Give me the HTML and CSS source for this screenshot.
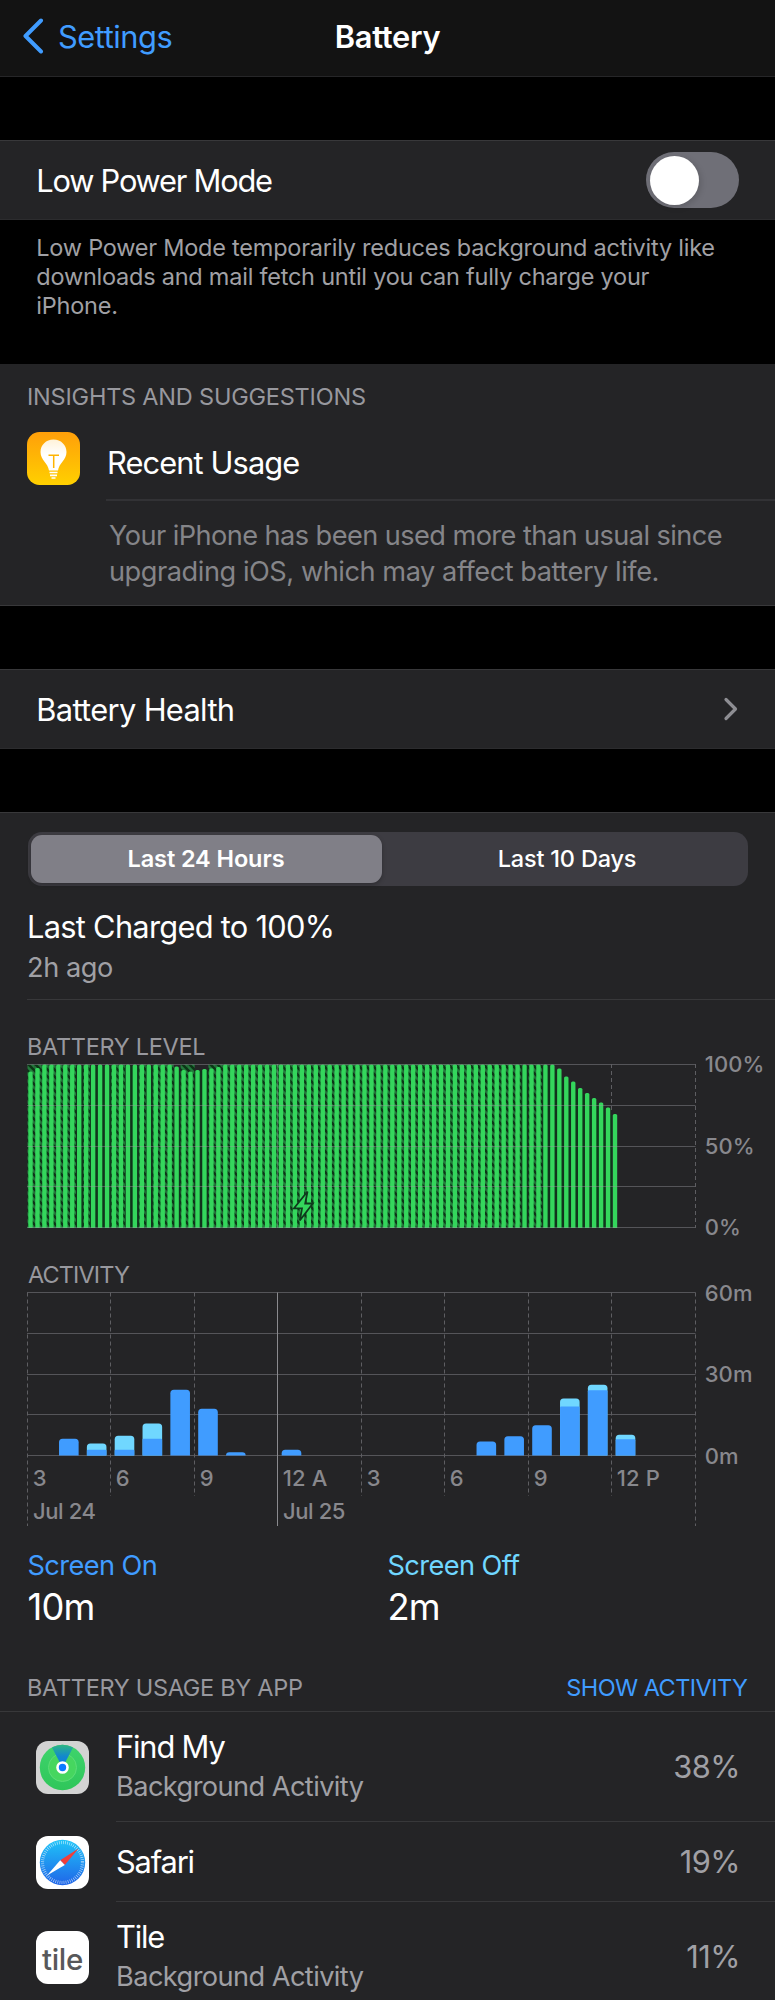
FILE: index.html
```
<!DOCTYPE html>
<html lang="en">
<head>
  <meta charset="UTF-8" />
  <meta name="viewport" content="width=device-width, initial-scale=1.0"/>
  <title>Battery</title>
  <link rel="stylesheet" href="styles.css">
</head>
<body>

  <header class="navbar">
    <a class="back" href="#">
      <svg width="22" height="36" viewBox="0 0 22 36"><path d="M19 2.5 L3.5 18 L19 33.5" fill="none" stroke="#409cff" stroke-width="4" stroke-linecap="round" stroke-linejoin="round"/></svg>
      <span>Settings</span>
    </a>
    <h1>Battery</h1>
  </header>

  <section class="group row-group">
    <span class="row-title low-power">Low Power Mode</span>
    <div class="toggle"><div class="knob"></div></div>
  </section>
  <p class="footnote">Low Power Mode temporarily reduces background activity like<br>downloads and mail fetch until you can fully charge your<br>iPhone.</p>

  <section class="group insights">
    <h2 class="label">INSIGHTS AND SUGGESTIONS</h2>
    <div class="insight-row">
      <svg class="insight-icon" width="53" height="53" viewBox="0 0 53 53">
        <defs>
          <linearGradient id="amber" x1="0" y1="0" x2="0" y2="1"><stop offset="0" stop-color="#ff9f0a"/><stop offset="1" stop-color="#ffd000"/></linearGradient>
          <linearGradient id="bulb" x1="0" y1="0" x2="0" y2="1"><stop offset="0" stop-color="#fff2d8"/><stop offset=".5" stop-color="#fff"/></linearGradient>
        </defs>
        <rect width="53" height="53" rx="12.5" fill="url(#amber)"/>
        <path d="M26.5 7.5 C19 7.5 13.5 13 13.5 20 C13.5 28 21 31 22 38.5 H31 C32 31 39.5 28 39.5 20 C39.5 13 34 7.5 26.5 7.5 Z" fill="url(#bulb)"/>
        <path d="M21.5 23.3 H32 M26.7 23.3 V36" stroke="#ffb400" stroke-width="1.5" fill="none"/>
        <path d="M22.5 40.5 H30.5 M23 43.3 H30 M24.5 46 H28.5" stroke="#fff" stroke-width="1.7" fill="none"/>
      </svg>
      <span class="row-title">Recent Usage</span>
    </div>
    <p class="insight-text">Your iPhone has been used more than usual since<br><span>upgrading iOS, which may affect battery life.</span></p>
  </section>

  <section class="group row-group health">
    <span class="row-title">Battery Health</span>
    <svg width="16" height="24" viewBox="0 0 16 24"><path d="M3 2.5 L12.5 12 L3 21.5" fill="none" stroke="#8e8e93" stroke-width="3.2" stroke-linecap="round" stroke-linejoin="round"/></svg>
  </section>

  <section class="group usage">
    <div class="segmented">
      <button class="active">Last 24 Hours</button>
      <button>Last 10 Days</button>
    </div>

    <div class="charged">
      <div class="row-title">Last Charged to 100%</div>
      <div class="sub">2h ago</div>
    </div>

    <h2 class="label level-label">BATTERY LEVEL</h2>
    <svg class="chart" id="levelChart" width="775" height="190" viewBox="0 0 775 190">
      <defs>
        <pattern id="stripes" width="7" height="7" patternUnits="userSpaceOnUse">
          <rect width="7" height="7" fill="#247a3c"/>
          <path d="M-1.5 -1.5 L8.5 8.5 M-1.5 5.5 L1.5 8.5 M5.5 -1.5 L8.5 1.5" stroke="#0b3616" stroke-width="2.6"/>
        </pattern>
      </defs>
    </svg>

    <h2 class="label activity-label">ACTIVITY</h2>
    <svg class="chart" id="activityChart" width="775" height="250" viewBox="0 0 775 250"></svg>

    <div class="screen-time">
      <div>
        <div class="screen-name on">Screen On</div>
        <div class="screen-value">10m</div>
      </div>
      <div>
        <div class="screen-name off">Screen Off</div>
        <div class="screen-value">2m</div>
      </div>
    </div>

    <div class="apps-head">
      <h2 class="label">BATTERY USAGE BY APP</h2>
      <a class="label show" href="#">SHOW ACTIVITY</a>
    </div>

    <div class="app">
      <svg class="app-icon" width="53" height="53" viewBox="0 0 53 53">
        <defs>
          <linearGradient id="findGreen" x1="0" y1="0" x2="0" y2="1"><stop offset="0" stop-color="#3fd46c"/><stop offset="1" stop-color="#2fc65a"/></linearGradient>
          <linearGradient id="beam" x1="0" y1="0" x2="0" y2="1"><stop offset="0" stop-color="#2db684"/><stop offset=".5" stop-color="#1389cc"/><stop offset="1" stop-color="#0a78e8"/></linearGradient>
        </defs>
        <rect width="53" height="53" rx="12" fill="#d3d3d3"/>
        <circle cx="26.5" cy="26.5" r="22.7" fill="url(#findGreen)"/>
        <circle cx="26.5" cy="26.5" r="14" fill="#46d65f" stroke="#5bdd78" stroke-width="1"/>
        <path d="M26.5 26.5 L16 6.4 A22.7 22.7 0 0 1 37 6.4 Z" fill="url(#beam)"/>
        <circle cx="26.5" cy="26.5" r="5" fill="#0a7aff" stroke="#fff" stroke-width="2.6"/>
      </svg>
      <div class="app-body two-line">
        <div>
          <div class="row-title">Find My</div>
          <div class="sub">Background Activity</div>
        </div>
        <span class="percent">38%</span>
      </div>
    </div>

    <div class="app">
      <svg class="app-icon" width="53" height="53" viewBox="0 0 53 53">
        <defs>
          <linearGradient id="safariBlue" x1="0" y1="0" x2="0" y2="1"><stop offset="0" stop-color="#1fc4f8"/><stop offset="1" stop-color="#2065e8"/></linearGradient>
        </defs>
        <rect width="53" height="53" rx="12" fill="#fff"/>
        <circle cx="26.5" cy="26.5" r="22.7" fill="url(#safariBlue)"/>
        <circle cx="26.5" cy="26.5" r="20" fill="none" stroke="#fff" stroke-opacity=".65" stroke-width="3.2" stroke-dasharray=".7 1.394"/>
        <path d="M42.5 12.5 L28.8 29 L24.2 24.2 Z" fill="#f03e3a"/>
        <path d="M11 39.5 L24.2 24.2 L28.8 29 Z" fill="#fff"/>
      </svg>
      <div class="app-body one-line">
        <div class="row-title">Safari</div>
        <span class="percent">19%</span>
      </div>
    </div>

    <div class="app">
      <div class="app-icon tile-icon">tile</div>
      <div class="app-body two-line">
        <div>
          <div class="row-title">Tile</div>
          <div class="sub">Background Activity</div>
        </div>
        <span class="percent">11%</span>
      </div>
    </div>
  </section>

  <script src="charts.js"></script>
</body>
</html>
```
FILE: charts.js
```
const NS = 'http://www.w3.org/2000/svg';
const LEFT = 27.5;
const RIGHT = 695.5;
const HOUR = (RIGHT - LEFT) / 24;

function add(parent, tag, attrs, text) {
  const el = document.createElementNS(NS, tag);
  for (const key in attrs) el.setAttribute(key, attrs[key]);
  if (text) el.textContent = text;
  parent.appendChild(el);
}

function hLines(svg, top, bottom) {
  for (let i = 0; i <= 4; i++) {
    const y = Math.round(top + (bottom - top) * i / 4) + 0.5;
    add(svg, 'line', { x1: 27, x2: RIGHT, y1: y, y2: y, class: 'grid' });
  }
}

function axisLabels(svg, labels, top, bottom) {
  labels.forEach((label, i) => {
    add(svg, 'text', { x: 704.7, y: top + (bottom - top) * i / 2 + 8, class: 'axis' }, label);
  });
}

// rounded top, square bottom
function barPath(x, y, w, bottom, r) {
  r = Math.min(r, bottom - y);
  return `M${x} ${bottom}V${y + r}q0 ${-r} ${r} ${-r}h${w - 2 * r}q${r} 0 ${r} ${r}V${bottom}Z`;
}

// battery level, one bar for every 15 minutes
function drawLevel() {
  const svg = document.getElementById('levelChart');
  const top = 14.5, bottom = 178, step = HOUR / 4;
  const drop = { 0: 7, 1: 3.5, 21: 2, 22: 5.5, 23: 7, 24: 5.5, 25: 4.5, 26: 4, 27: 2.5,
    76: 4, 77: 12, 78: 17, 79: 23.5, 80: 28.5, 81: 33.5, 82: 38, 83: 43, 84: 49.5 };
  const idle = [7, 9, 10, 11, 14, 15, 17, 21, 24, 25, 71];

  for (let i = 0; i < 84; i++) {
    const x = LEFT + i * step;
    const y = top + (drop[i] || 0);
    const plain = idle.includes(i) || i > 73;
    const gapTop = plain ? Math.max(y, top + (drop[i + 1] || 0)) + 1 : top;
    add(svg, 'rect', { x: x, y: gapTop, width: step + 0.1, height: bottom - gapTop, fill: plain ? '#10351c' : 'url(#stripes)' });
  }
  for (let i = 0; i < 85; i++) {
    const y = top + (drop[i] || 0);
    add(svg, 'path', { d: barPath(LEFT + i * step + 0.8, y, 4.4, bottom, 1.5), fill: '#34d65c' });
  }
  hLines(svg, 14, 177);
  add(svg, 'line', { x1: 277.5, x2: 277.5, y1: 14, y2: 178, class: 'grid' });
  add(svg, 'line', { x1: 611.5, x2: 611.5, y1: 14, y2: 62, class: 'dashed' });
  add(svg, 'line', { x1: RIGHT, x2: RIGHT, y1: 14, y2: 178, class: 'dashed' });
  add(svg, 'path', { d: 'M307.5 141.5L294 158.3H302L299.8 170.5L312.8 153.5H305.2Z', fill: '#34d65c', stroke: '#0f3a1c', 'stroke-width': 1.8 });
  axisLabels(svg, ['100%', '50%', '0%'], 14, 177);
}

// screen time per hour: [hour, total height, screen on height]
function drawActivity() {
  const svg = document.getElementById('activityChart');
  const top = 12.5, bottom = 175.5;
  const data = [
    [1, 16.7, 16.7], [2, 12, 5.7], [3, 19.7, 5.7], [4, 32, 16.7], [5, 65.7, 65.7],
    [6, 46.7, 46.7], [7, 3.3, 3.3], [9, 5.7, 5.7], [16, 14, 14], [17, 19.3, 19.3],
    [18, 30.3, 30.3], [19, 57, 49], [20, 70.7, 65.3], [21, 20.7, 16.3]
  ];
  hLines(svg, 12, 175);
  const hours = ['3', '6', '9', '12 A', '3', '6', '9', '12 P'];
  for (let i = 0; i <= 8; i++) {
    const x = Math.floor(LEFT + i * HOUR * 3 - 0.5) + 0.5;
    const midnight = i === 3;
    const y2 = i % 8 === 0 || midnight ? 246 : 216;
    add(svg, 'line', { x1: x, x2: x, y1: top, y2: y2, class: midnight ? 'solid' : 'dashed' });
    if (hours[i]) add(svg, 'text', { x: x + 5.3, y: 205.5, class: 'axis' }, hours[i]);
  }
  add(svg, 'text', { x: 33, y: 238.5, class: 'axis day' }, 'Jul 24');
  add(svg, 'text', { x: 283, y: 238.5, class: 'axis day' }, 'Jul 25');
  for (const [hour, total, on] of data) {
    const x = LEFT + hour * HOUR + 3.7;
    if (total > on) {
      add(svg, 'path', { d: barPath(x, bottom - total, 19.6, bottom, 3.5), fill: '#70d7ff' });
    }
    add(svg, 'path', { d: barPath(x, bottom - on, 19.6, bottom, total > on ? 1 : 3.5), fill: '#409cff' });
  }
  axisLabels(svg, ['60m', '30m', '0m'], top, bottom);
}

drawLevel();
drawActivity();
```
FILE: styles.css
```
* {
  box-sizing: border-box;
}
body {
  margin: 0;
  background: #000;
  color: #fff;
  font-family: Inter, "Liberation Sans", sans-serif;
  font-size: 30.8px;
  height: 2000px;
  overflow: hidden;
}
h1, h2, p {
  margin: 0;
  font-weight: 400;
}
a {
  text-decoration: none;
}
.navbar {
  display: grid;
  grid-template-columns: 1fr auto 1fr;
  align-items: center;
  height: 77px;
  padding: 0 22px 4px;
  background: #131313;
  border-bottom: 1px solid #262628;
}
.back {
  display: flex;
  align-items: center;
  gap: 14px;
  color: #409cff;
  letter-spacing: -0.45px;
}
.navbar h1 {
  font-size: 30.8px;
  font-weight: 600;
  letter-spacing: -0.3px;
}
.group {
  background: #242426;
}
.row-title {
  line-height: 38px;
  letter-spacing: -0.9px;
}
.row-group {
  display: flex;
  align-items: center;
  justify-content: space-between;
  height: 80px;
  margin-top: 63px;
  padding: 0 36px 0 36.3px;
  border-top: 1px solid #38383a;
  border-bottom: 1px solid #2c2c2e;
}
.row-group .row-title {
  padding-top: 1px;
}
.low-power {
  letter-spacing: -1.22px;
}
.toggle {
  width: 93px;
  height: 56px;
  padding: 3.5px;
  border-radius: 28px;
  background: #6f6f77;
}
.knob {
  width: 49px;
  height: 49px;
  border-radius: 50%;
  background: #fff;
  box-shadow: 2px 2px 6px rgba(0,0,0,0.15);
}
.footnote {
  height: 144px;
  padding: 14px 30px 0 36.3px;
  font-size: 23.5px;
  line-height: 28.8px;
  letter-spacing: -0.235px;
  color: #a0a0a5;
}
.label {
  font-size: 23.5px;
  line-height: 30px;
  letter-spacing: -0.3px;
  color: #98989e;
}
.insights {
  height: 242px;
  padding: 17.5px 0 0 27px;
  border-bottom: 1px solid #38383a;
}
.insights .label {
  letter-spacing: -0.21px;
}
.insight-row {
  display: flex;
  gap: 26px;
  height: 68.5px;
  margin-top: 20.5px;
}
.insight-icon {
  flex: none;
}
.insight-row .row-title {
  flex: 1;
  padding: 11.5px 0 0 1px;
  border-bottom: 2px solid #323235;
}
.insight-text {
  padding: 17px 0 0 82px;
  font-size: 27.2px;
  line-height: 36px;
  letter-spacing: -0.58px;
  color: #858589;
}
.insight-text span {
  letter-spacing: -0.46px;
}
.health .row-title {
  letter-spacing: -0.65px;
}
.usage {
  height: 1188px;
  margin-top: 63px;
  border-top: 1px solid #38383a;
}
.segmented {
  display: flex;
  height: 54px;
  margin: 19px 27.5px 0;
  padding: 3px;
  border-radius: 14px;
  background: #3d3c42;
}
.segmented button {
  flex: 1;
  padding: 0 0 1px 8px;
  border: none;
  border-radius: 11px;
  background: none;
  color: #fff;
  font-family: inherit;
  font-size: 23.5px;
  font-weight: 500;
  letter-spacing: -0.2px;
}
.segmented .active {
  flex: 0 0 351px;
  padding-left: 0;
  font-weight: 600;
  letter-spacing: -0.1px;
  background: #807f87;
  box-shadow: 0 2px 4px rgba(0,0,0,0.25);
}
.charged {
  height: 114px;
  margin-left: 27px;
  padding-top: 22px;
  border-bottom: 1px solid #38383a;
}
.charged .row-title {
  letter-spacing: -0.72px;
}
.sub {
  font-size: 27.2px;
  line-height: 34px;
  letter-spacing: -0.58px;
  color: #a0a0a5;
}
.charged .sub {
  margin-top: 5px;
  letter-spacing: -0.45px;
}
.level-label {
  height: 50px;
  padding: 32px 0 0 27px;
}
.chart {
  display: block;
}
.activity-label {
  height: 40px;
  padding: 19.5px 0 0 28px;
  letter-spacing: -0.9px;
}
.grid {
  stroke: #9a9aa0;
  stroke-opacity: 0.42;
}
.dashed {
  stroke: #5e5e62;
  stroke-dasharray: 4 3;
}
.solid {
  stroke: #8a8a8e;
}
.axis {
  font-size: 22px;
  font-weight: 500;
  fill: #88888d;
  letter-spacing: 0.1px;
}
.day {
  letter-spacing: -0.4px;
}
.screen-time {
  display: grid;
  grid-template-columns: 1fr 1fr;
  padding: 18.5px 27.5px 0;
  height: 131px;
}
.screen-name {
  font-size: 27.2px;
  line-height: 34px;
  letter-spacing: -0.6px;
}
.on {
  color: #409cff;
}
.off {
  color: #70d7ff;
}
.screen-value {
  margin-top: 2px;
  font-size: 36.3px;
  line-height: 44px;
  letter-spacing: -0.8px;
}
.apps-head {
  display: flex;
  justify-content: space-between;
  align-items: flex-end;
  height: 51px;
  padding: 0 27.5px 8px 27px;
  border-bottom: 1px solid #38383a;
}
.apps-head .show {
  color: #409cff;
  letter-spacing: -0.55px;
}
.app {
  display: flex;
  align-items: center;
  padding-left: 36px;
}
.app-icon {
  flex: none;
  width: 53px;
  height: 53px;
  margin-right: 27px;
}
.app-body {
  flex: 1;
  display: flex;
  align-items: center;
  justify-content: space-between;
  padding-right: 35px;
  border-bottom: 1px solid #38383a;
}
.app .row-title {
  letter-spacing: -1.15px;
}
.two-line {
  height: 110px;
}
.two-line .row-title {
  margin-top: -1px;
}
.two-line .sub {
  margin-top: 4px;
}
.one-line {
  height: 80px;
}
.percent {
  color: #a0a0a5;
  letter-spacing: -0.5px;
}
.tile-icon {
  border-radius: 12px;
  background: #fff;
  color: #58585a;
  font-size: 29.5px;
  font-weight: 500;
  line-height: 56px;
  text-align: center;
  letter-spacing: -0.3px;
}
```
